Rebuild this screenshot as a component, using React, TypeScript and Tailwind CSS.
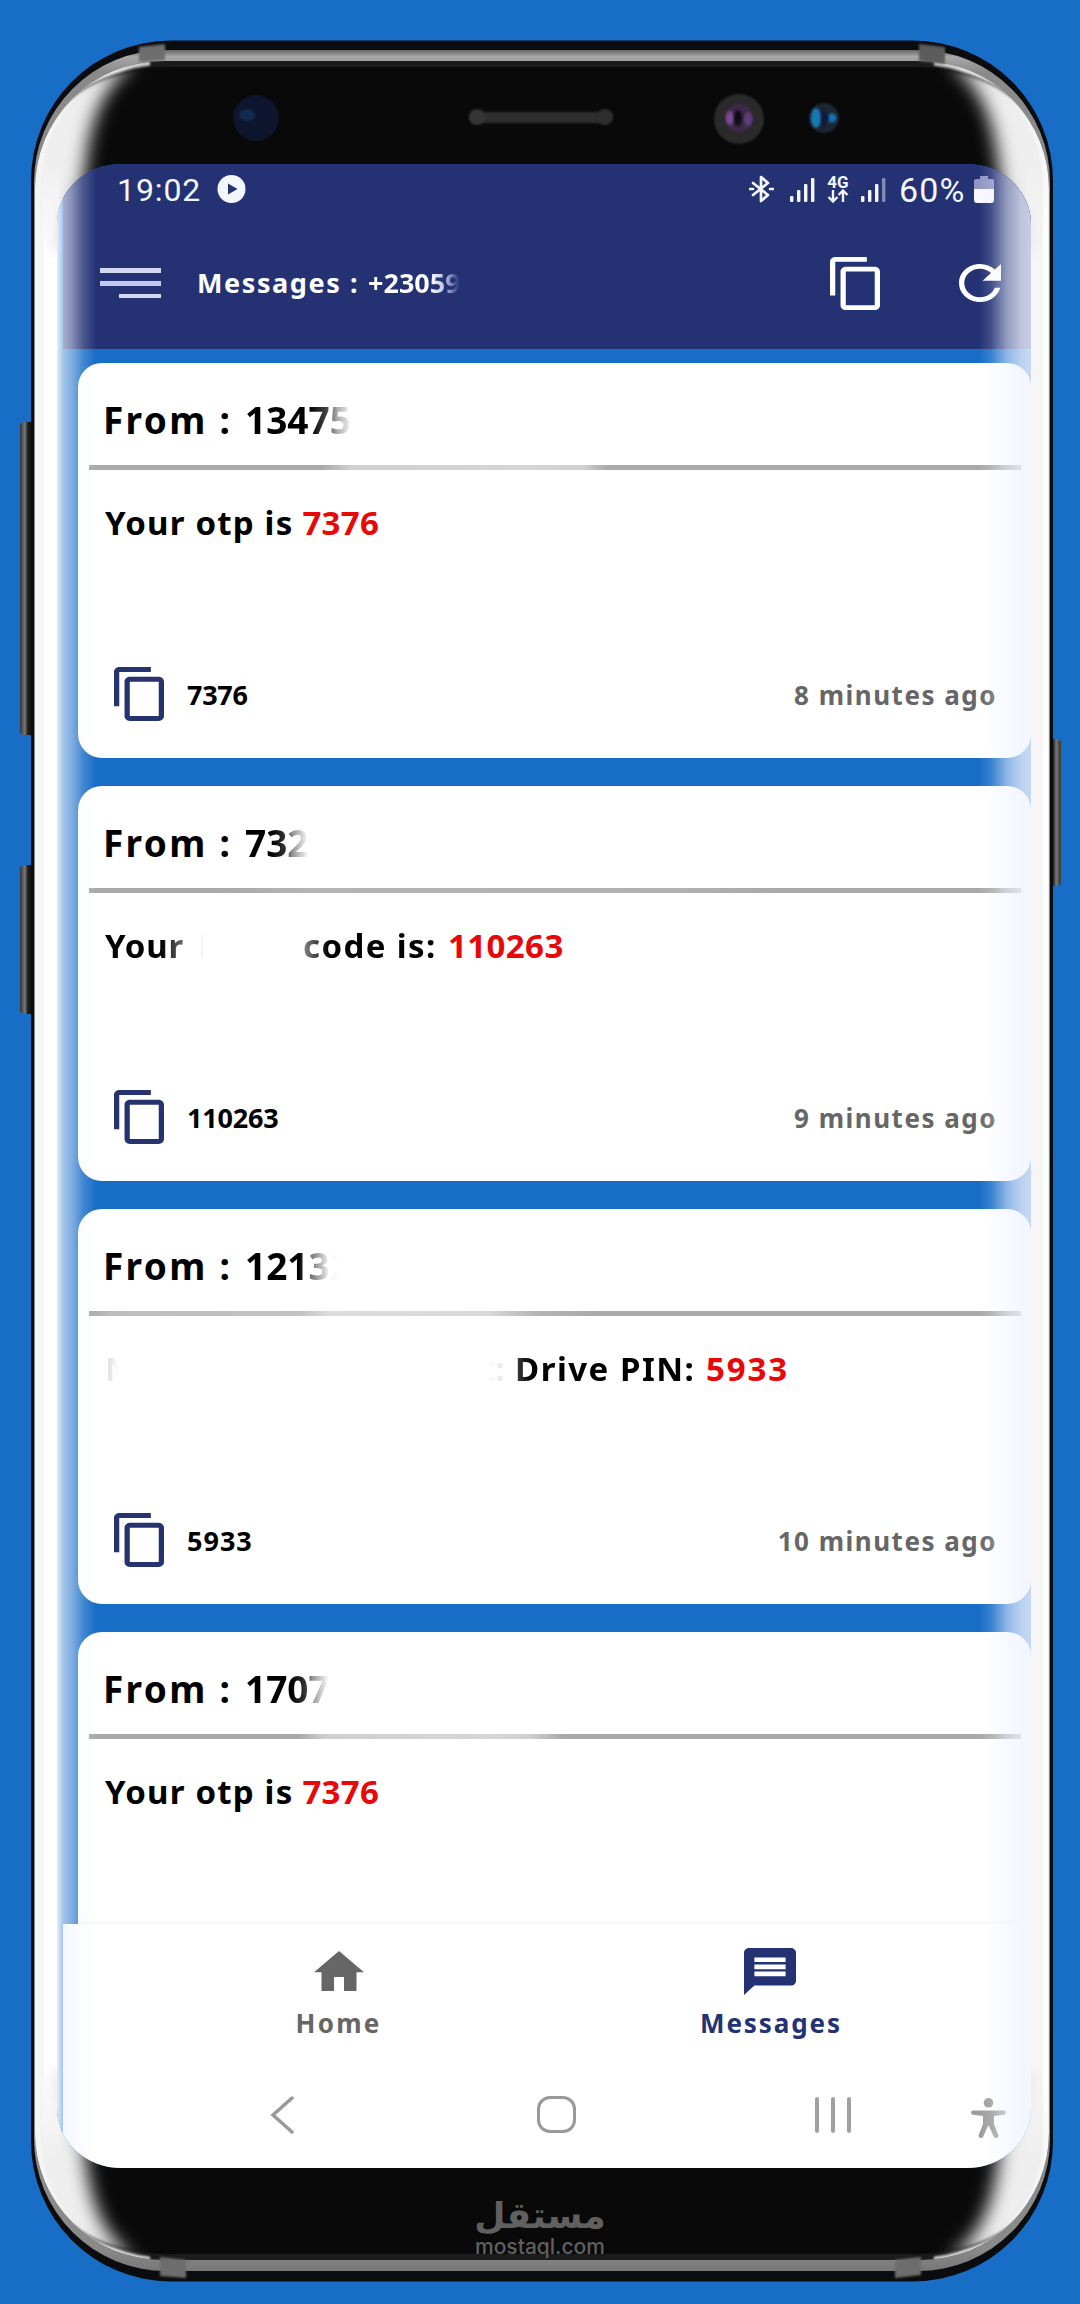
import React, { FC } from "react";

type Message = {
  from: string;
  fromFade: string;
  divider: string;
  body: React.ReactNode;
  code?: string;
  codeSpacing?: string;
  time?: string;
};

type IconProps = { className?: string };

const CopyIcon: FC<IconProps> = ({ className }) => (
  <svg viewBox="2 1 19 22" preserveAspectRatio="none" fill="currentColor" className={className}>
    <path d="M16 1H4c-1.1 0-2 .9-2 2v14h2V3h12V1zm3 4H8c-1.1 0-2 .9-2 2v14c0 1.1.9 2 2 2h11c1.1 0 2-.9 2-2V7c0-1.1-.9-2-2-2zm0 16H8V7h11v14z" />
  </svg>
);

const SignalIcon: FC<{ weak?: boolean }> = ({ weak }) => (
  <svg viewBox="0 0 25 25" fill="#f3f5ff" className="w-[25px] h-[25px]">
    <rect x="0" y="19" width="3.4" height="6" rx="1" />
    <rect x="7" y="13" width="3.4" height="12" rx="1" />
    <rect x="14" y="7" width="3.4" height="18" rx="1" />
    <rect x="21" y="1" width="3.4" height="24" rx="1" opacity={weak ? 0.45 : 1} />
  </svg>
);

const messages: Message[] = [
  {
    from: "13475",
    fromFade: "bg-[linear-gradient(90deg,#000_64px,#444_82px,#aaa_92px,#fff_108px)]",
    divider:
      "bg-[linear-gradient(90deg,#a9a9a9_232px,#cfcfcf_262px,#d6d6d6_440px,#cfcfcf_495px,#a9a9a9_518px)]",
    body: (
      <>
        <span className="tracking-[1.2px]">Your otp is</span>
        <span className="ml-[9px] tracking-[0.3px] text-[#ea0707]">7376</span>
      </>
    ),
    code: "7376",
    codeSpacing: "tracking-[-0.3px]",
    time: "8 minutes ago",
  },
  {
    from: "732",
    fromFade: "bg-[linear-gradient(90deg,#000_26px,#333_40px,#999_48px,#fff_64px)]",
    divider:
      "bg-[linear-gradient(90deg,#a9a9a9_130px,#b4b4b4_220px,#b0b0b0_600px,#a9a9a9_690px)]",
    body: (
      <>
        <span className="w-[96px] tracking-[0.8px] bg-[linear-gradient(90deg,#000_56px,#777_80px)] bg-clip-text text-transparent">
          Your
        </span>
        <span className="w-[2px] h-[24px] bg-[#f6f6f6]" />
        <span className="ml-[100px] w-[145px] tracking-[1.4px] bg-[linear-gradient(90deg,#888_0px,#000_26px)] bg-clip-text text-transparent">
          code is:
        </span>
        <span className="tracking-[0.4px] text-[#ea0707]">110263</span>
      </>
    ),
    code: "110263",
    codeSpacing: "tracking-[-0.2px]",
    time: "9 minutes ago",
  },
  {
    from: "12132",
    fromFade: "bg-[linear-gradient(90deg,#000_54px,#666_64px,#aaa_74px,#f4f4f4_84px,#fff_94px)]",
    divider:
      "bg-[linear-gradient(90deg,#a9a9a9_0px,#bdbdbd_20px,#c2c2c2_210px,#dcdcdc_240px,#d8d8d8_400px,#b4b4b4_450px,#a9a9a9_510px)]",
    body: (
      <>
        <span className="w-[30px] bg-[linear-gradient(90deg,#e6e6e6_6px,#fff_13px)] bg-clip-text text-transparent">
          N
        </span>
        <span className="ml-[346px] w-[34px] bg-[linear-gradient(90deg,#fff_8px,#ececec_16px)] bg-clip-text text-transparent">
          t:
        </span>
        <span className="w-[191px] tracking-[1.5px] bg-[linear-gradient(90deg,#444_0px,#000_16px)] bg-clip-text text-transparent">
          Drive PIN:
        </span>
        <span className="tracking-[1.9px] text-[#ea0707]">5933</span>
      </>
    ),
    code: "5933",
    codeSpacing: "tracking-[1px]",
    time: "10 minutes ago",
  },
  {
    from: "1707",
    fromFade: "bg-[linear-gradient(90deg,#000_46px,#333_60px,#999_68px,#fff_84px)]",
    divider:
      "bg-[linear-gradient(90deg,#a9a9a9_210px,#cfcfcf_236px,#d6d6d6_400px,#cfcfcf_440px,#a9a9a9_475px)]",
    body: (
      <>
        <span className="tracking-[1.2px]">Your otp is</span>
        <span className="ml-[9px] tracking-[0.3px] text-[#ea0707]">7376</span>
      </>
    ),
  },
];

const MessageCard: FC<{ message: Message }> = ({ message }) => {
  return (
    <div className="h-[395px] shrink-0 rounded-[24px] bg-white flex flex-col">
      <div className="h-[101px] pt-[12px] pl-[25px] flex items-center text-[37px] leading-[44px] font-bold text-black">
        <span className="w-[142px] whitespace-pre tracking-[2.3px]">From :</span>
        <span className={`${message.fromFade} bg-clip-text text-transparent`}>
          {message.from}
        </span>
      </div>
      <div className={`h-[5px] mt-[1px] ml-[11px] mr-[10px] ${message.divider}`} />
      <div className="mt-[33px] h-[40px] pl-[27px] flex items-center whitespace-pre text-[33px] leading-[40px] font-bold text-black">
        {message.body}
      </div>
      {message.code && (
        <div className="mt-[124px] h-[54px] pl-[36px] pr-[34px] flex items-center font-bold text-[27px] leading-[32px]">
          <CopyIcon className="w-[50px] h-[54px] text-[#27336f]" />
          <span className={`ml-[23px] pt-[1px] text-black ${message.codeSpacing}`}>{message.code}</span>
          <span className="ml-auto pt-[1px] text-[#666] text-[26px] tracking-[1.5px]">{message.time}</span>
        </div>
      )}
    </div>
  );
};

const Corner = () => (
  <g>
    <path
      d="M20 1170V170C26 104 70 66 136 62C108 82 92 110 86 160C82 200 70 220 60 240V1170Z"
      fill="#eeeeee"
      filter="url(#soft)"
    />
    <path d="M38 1170V185C40 130 72 72 150 63" fill="none" stroke="#f7f7f7" strokeWidth="5" opacity="0.8" filter="url(#edge)" />
    <path d="M48 128C64 98 94 70 170 67" fill="none" stroke="#151515" strokeWidth="2" opacity="0.6" filter="url(#edge)" />
  </g>
);

const PhoneBody = () => (
  <svg viewBox="0 0 1080 2304" className="absolute left-0 top-0 w-[1080px] h-[2304px]" aria-hidden="true">
    <defs>
      <filter id="soft" x="-50%" y="-10%" width="200%" height="120%">
        <feGaussianBlur stdDeviation="9" />
      </filter>
      <filter id="edge" x="-50%" y="-10%" width="200%" height="120%">
        <feGaussianBlur stdDeviation="1.2" />
      </filter>
      <linearGradient id="metal" x1="0" y1="0" x2="0" y2="1">
        <stop offset="0" stopColor="#666" />
        <stop offset="0.003" stopColor="#a8a8a8" />
        <stop offset="0.01" stopColor="#8a8a8a" />
        <stop offset="0.5" stopColor="#8a8a8a" />
        <stop offset="0.99" stopColor="#8a8a8a" />
        <stop offset="1" stopColor="#777" />
      </linearGradient>
      <linearGradient id="side" x1="0" y1="0" x2="0" y2="1">
        <stop offset="0" stopColor="#f6f6f6" stopOpacity="0" />
        <stop offset="0.05" stopColor="#f6f6f6" />
        <stop offset="0.95" stopColor="#f6f6f6" />
        <stop offset="1" stopColor="#f6f6f6" stopOpacity="0" />
      </linearGradient>
      <linearGradient id="sideInner" x1="0" y1="0" x2="0" y2="1">
        <stop offset="0" stopColor="#fff" stopOpacity="0" />
        <stop offset="0.05" stopColor="#fff" />
        <stop offset="0.95" stopColor="#fff" />
        <stop offset="1" stopColor="#fff" stopOpacity="0" />
      </linearGradient>
      <linearGradient id="button" x1="0" y1="0" x2="1" y2="0">
        <stop offset="0" stopColor="#333" />
        <stop offset="0.3" stopColor="#777" />
        <stop offset="0.5" stopColor="#1c1c1c" />
        <stop offset="1" stopColor="#050505" />
      </linearGradient>
      <clipPath id="glass">
        <rect x="35" y="61" width="1014" height="2199" rx="128" />
      </clipPath>
    </defs>

    <rect x="20" y="422" width="16" height="313" rx="4" fill="url(#button)" />
    <rect x="20" y="865" width="16" height="149" rx="4" fill="url(#button)" />
    <rect x="-1061" y="739" width="16" height="147" rx="4" fill="url(#button)" transform="scale(-1 1)" />

    <rect x="31" y="40.5" width="1022" height="2241" rx="140" fill="#0a0c10" />
    <rect x="34" y="50" width="1016" height="2221" rx="132" fill="url(#metal)" />
    <rect x="35" y="61" width="1014" height="2199" rx="128" fill="#1c1c1c" />
    <rect x="38" y="67" width="1008" height="2187" rx="124" fill="#090909" />
    <g clipPath="url(#glass)">
      <Corner />
      <g transform="translate(1084 0) scale(-1 1)">
        <Corner />
      </g>
      <g transform="translate(0 2322) scale(1 -1)">
        <Corner />
      </g>
      <g transform="translate(1084 2322) scale(-1 -1)">
        <Corner />
      </g>
      <rect x="35" y="140" width="10" height="2042" fill="url(#side)" />
      <rect x="44" y="160" width="16" height="2002" fill="url(#sideInner)" />
      <rect x="1026" y="160" width="18" height="2002" fill="url(#side)" />
      <rect x="1043" y="140" width="5" height="2042" fill="url(#sideInner)" />
    </g>

    {/* antenna lines */}
    <path d="M139 47L165 44V60L139 62Z" fill="#6d6d6d" filter="url(#edge)" />
    <path d="M919 44L945 47V64L919 61Z" fill="#5c5c5c" filter="url(#edge)" />
    <path d="M160 2257L186 2260V2278L160 2276Z" fill="#6d6d6d" filter="url(#edge)" />
    <path d="M895 2260L921 2257V2275L895 2278Z" fill="#6d6d6d" filter="url(#edge)" />

    {/* sensors and speaker */}
    <circle cx="256" cy="118" r="23" fill="#10142e" filter="url(#edge)" />
    <ellipse cx="247" cy="115" rx="8" ry="6" fill="#143a68" filter="url(#edge)" opacity="0.6" />
    <rect x="470" y="112" width="142" height="11" rx="5" fill="#2f2f2f" filter="url(#edge)" />
    <circle cx="477" cy="117" r="8" fill="#343434" filter="url(#edge)" />
    <circle cx="605" cy="117" r="8" fill="#2d2d2d" filter="url(#edge)" />
    <circle cx="739" cy="119" r="25" fill="#2a292c" filter="url(#edge)" />
    <circle cx="739" cy="118" r="14" fill="#3d2b4a" filter="url(#edge)" />
    <ellipse cx="730" cy="118" rx="4" ry="7" fill="#7a4a90" filter="url(#edge)" />
    <ellipse cx="748" cy="119" rx="4" ry="7" fill="#5f3d7d" filter="url(#edge)" />
    <ellipse cx="738" cy="118" rx="4" ry="8" fill="#0b0b12" filter="url(#edge)" />
    <circle cx="824" cy="118" r="15" fill="#1e2836" filter="url(#edge)" />
    <ellipse cx="816" cy="118" rx="5" ry="10" fill="#1479b4" filter="url(#edge)" />
    <circle cx="832" cy="118" r="4.5" fill="#1671ad" filter="url(#edge)" />
    <path d="M822 108L829 118L822 128Z" fill="#0d1540" filter="url(#edge)" />
  </svg>
);

const StatusBar = () => (
  <div className="h-[50px] pl-[54px] flex items-center text-[#f3f5ff] font-['Roboto',sans-serif]">
    <span className="w-[100px] text-[32px] leading-[38px] pt-[1px] tracking-[0.9px]">19:02</span>
    <svg viewBox="0 0 29 28" className="w-[29px] h-[28px]">
      <circle cx="14.5" cy="14" r="14" fill="#f3f5ff" />
      <path d="M11 8.500L20.500 14L11 19.500Z" fill="#243274" />
    </svg>
    <svg viewBox="0 0 25 28" fill="none" stroke="#f3f5ff" strokeWidth="2.7" className="ml-[503px] w-[25px] h-[28px]">
      <path d="M4 8L19 20L12 26V2L19 8L4 20" strokeLinejoin="round" strokeLinecap="round" />
      <path d="M1 14H4M21 14H24" strokeLinecap="round" />
    </svg>
    <div className="ml-[16px]">
      <SignalIcon />
    </div>
    <div className="ml-[11px] w-[24px] flex flex-col items-center">
      <span className="text-[17px] leading-[14px] font-bold">4G</span>
      <svg viewBox="0 0 24 14" fill="none" stroke="#f3f5ff" strokeWidth="2.4" className="w-[24px] h-[14px]">
        <path d="M7 1V12M2.500 8L7 12.500L11.500 8M17 13V2M12.500 6L17 1.500L21.500 6" />
      </svg>
    </div>
    <div className="ml-[11px]">
      <SignalIcon weak />
    </div>
    <span className="ml-[13px] w-[75px] text-[34px] leading-[38px] pt-[1px] tracking-[1.2px]">60%</span>
    <svg viewBox="0 0 20 27" className="w-[20px] h-[27px]">
      <path d="M6 0H14V3H18Q20 3 20 5V14H0V5Q0 3 2 3H6Z" fill="#8f96c4" />
      <path d="M0 13H20V24Q20 27 17 27H3Q0 27 0 24Z" fill="#f6f7ff" />
    </svg>
  </div>
);

const Toolbar = () => (
  <div className="h-[135px] pt-[3px] pl-[37px] flex items-center">
    <div className="w-[61px] flex flex-col items-end gap-[8px] pb-[1px]">
      <div className="w-[61px] h-[5px] bg-[#d3d7f3]" />
      <div className="w-[61px] h-[5px] bg-[#c2c8ee]" />
      <div className="w-[42px] h-[4px] bg-[#d3d7f3]" />
    </div>
    <div className="ml-[36px] w-[633px] flex text-[27px] leading-[32px] font-bold text-white">
      <span className="w-[171px] tracking-[1.6px]">Messages :</span>
      <span className="bg-[linear-gradient(90deg,#fff_62px,#b4bada_78px,#303d7e_90px,#243274_96px)] bg-clip-text text-transparent">
        +23059
      </span>
    </div>
    <CopyIcon className="w-[50px] h-[53px] text-white" />
    <svg viewBox="4 4 16 16" preserveAspectRatio="none" fill="#fff" className="ml-[79px] w-[42px] h-[38px]">
      <path d="M17.650 6.350C16.200 4.900 14.210 4 12 4c-4.420 0-7.990 3.580-7.990 8s3.570 8 7.990 8c3.730 0 6.840-2.550 7.730-6h-2.080c-.820 2.330-3.040 4-5.650 4-3.310 0-6-2.690-6-6s2.690-6 6-6c1.660 0 3.140.690 4.220 1.780L13 11h7V4l-2.350 2.350z" />
    </svg>
  </div>
);

const BottomNav = () => (
  <div className="h-[132px] pl-[60px] flex font-bold text-[26px] leading-[32px] bg-white">
    <div className="w-[431px] pt-[27px] flex flex-col items-center text-[#666]">
      <svg viewBox="2 3 20 17" preserveAspectRatio="none" fill="currentColor" className="w-[50px] h-[40px]">
        <path d="M10 20v-6h4v6h5v-8h3L12 3 2 12h3v8z" />
      </svg>
      <span className="mt-[16px] tracking-[2.2px]">Home</span>
    </div>
    <div className="w-[431px] pt-[24px] flex flex-col items-center text-[#243274]">
      <svg viewBox="2 2 20 20" preserveAspectRatio="none" fill="currentColor" className="w-[52px] h-[47px]">
        <path d="M20 2H4c-1.100 0-2 .900-2 2v18l4-4h14c1.100 0 2-.900 2-2V4c0-1.100-.900-2-2-2zM6 9h12v2H6V9zm12 5H6v-2h12v2zm0-6H6V6h12v2z" />
      </svg>
      <span className="mt-[12px] pl-[3px] tracking-[1.9px]">Messages</span>
    </div>
  </div>
);

const SystemNav = () => (
  <div className="h-[112px] pl-[207px] pt-[11px] flex items-center bg-white">
    <svg viewBox="0 0 24 38" fill="none" stroke="#999" strokeWidth="3.5" strokeLinecap="round" className="mb-[6px] w-[24px] h-[38px]">
      <path d="M22 2L3 19L22 36" />
    </svg>
    <div className="ml-[243px] mb-[6px] w-[39px] h-[37px] rounded-[13px] border-[3px] border-[#999]" />
    <div className="ml-[239px] mb-[6px] w-[36px] flex justify-between">
      <div className="w-[4px] h-[36px] rounded-sm bg-[#a0a0a0]" />
      <div className="w-[4px] h-[36px] rounded-sm bg-[#a0a0a0]" />
      <div className="w-[4px] h-[36px] rounded-sm bg-[#a0a0a0]" />
    </div>
    <svg viewBox="0 0 35 40" fill="#9c9c9c" className="ml-[120px] w-[35px] h-[40px]">
      <circle cx="17.5" cy="4.8" r="4.8" />
      <path d="M2 12.500H33Q35 12.500 35 14.500T33 16.800L23 18V26L27.500 37.500Q27.500 40 25 40Q23.500 40 23 39L18 28H17L12 39Q11.500 40 10 40Q7.500 40 7.500 37.500L12 26V18L2 16.800Q0 16.500 0 14.500T2 12.500Z" />
    </svg>
  </div>
);

const App = () => {
  return (
    <div className="relative w-[1080px] h-[2304px] overflow-hidden bg-[#186dc6] font-['Noto_Sans',sans-serif]">
      <PhoneBody />
      <div className="relative pt-[164px] pl-[57px] flex flex-col">
        <div className="relative w-[974px] h-[2004px] overflow-hidden rounded-[64px/60px] bg-[#186dc6] pl-[6px] flex flex-col">
          <div className="bg-[#243274]">
            <StatusBar />
            <Toolbar />
          </div>
          <div className="h-[1575px] pt-[14px] pl-[15px] flex flex-col gap-[28px] overflow-hidden">
            {messages.map((message, index) => (
              <MessageCard key={index} message={message} />
            ))}
          </div>
          <div className="shadow-[0_0_6px_rgba(0,0,0,0.08)] relative">
            <BottomNav />
            <SystemNav />
          </div>

          {/* curved glass reflections */}
          <div className="absolute left-0 top-0 w-[40px] h-full bg-[linear-gradient(90deg,rgba(240,244,255,0.95)_0px,rgba(240,244,255,0.65)_6px,rgba(240,244,255,0.5)_14px,rgba(240,244,255,0.2)_26px,rgba(240,244,255,0)_39px)]" />
          <div className="absolute right-0 top-0 w-[52px] h-full bg-[linear-gradient(90deg,rgba(240,244,255,0)_0px,rgba(240,244,255,0.15)_12px,rgba(240,244,255,0.55)_28px,rgba(240,244,255,0.75)_42px,rgba(240,244,255,0.8)_52px)]" />
        </div>

        <div className="mt-[26px] ml-[417px] w-[132px] flex flex-col items-center text-[#606060]">
          <span dir="rtl" className="font-['DejaVu_Sans',sans-serif] font-bold text-[36px] leading-[44px] whitespace-nowrap">
            مستقل
          </span>
          <span className="-mt-[3px] font-['Inter',sans-serif] font-medium text-[21px] leading-[24px]">
            mostaql.com
          </span>
        </div>
      </div>
    </div>
  );
};

export default App;
